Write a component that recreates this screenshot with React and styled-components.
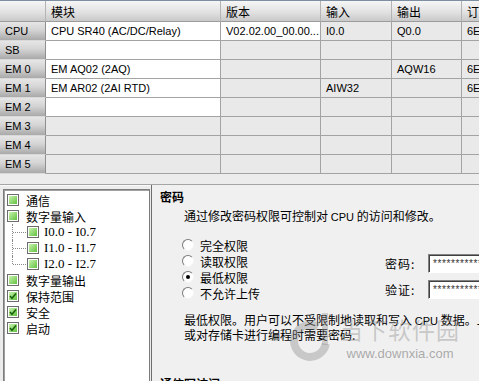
import React from 'react';
import styled, { createGlobalStyle } from 'styled-components';

const GlobalStyle = createGlobalStyle`
  html, body {
    margin: 0;
    padding: 0;
    background: #ececec;
  }
  body {
    font-family: "Liberation Sans", "Noto Sans CJK SC", sans-serif;
    color: #000;
  }
`;

const Window = styled.div`
  width: 479px;
  height: 381px;
  overflow: hidden;
  display: flex;
  flex-direction: column;
  background: #ececec;
`;

const Table = styled.div`
  display: grid;
  grid-template-columns: 46px 175px 100px 71px 70px 80px;
  grid-template-rows: 21px repeat(8, 19px);
  width: 542px;
  border-top: 1px solid #7f8fa2;
  box-sizing: border-box;
`;

const HeadCell = styled.div`
  display: flex;
  align-items: center;
  padding-left: 5px;
  font-family: "Noto Sans CJK SC", sans-serif;
  font-size: 12px;
  background: linear-gradient(#f6f6f6, #e2e2e2 55%, #c9c9c9);
  border-right: 1px solid #b4b4b4;
  border-bottom: 1px solid #9c9c9c;
  white-space: nowrap;
  overflow: hidden;
`;

const RowHead = styled.div`
  display: flex;
  align-items: center;
  padding-left: 5px;
  font-size: 11px;
  background: linear-gradient(#e6e6e6, #d4d4d4 45%, #a9a9a9);
  border-bottom: 1px solid #d9d9d9;
  border-right: 1px solid #8f8f8f;
  box-sizing: border-box;
`;

const Cell = styled.div`
  display: flex;
  align-items: center;
  padding-left: 5px;
  font-size: 11px;
  background: ${p => (p.$white ? '#ffffff' : '#e9e9e9')};
  border-right: 1px solid #a3a3a3;
  border-bottom: 1px solid #a3a3a3;
  white-space: nowrap;
  overflow: hidden;
`;

const Gap = styled.div`
  height: 10px;
  border-bottom: 1px solid #a5a5a5;
  box-shadow: 0 1px 0 #fafafa;
`;

const Bottom = styled.div`
  flex: 1;
  display: flex;
  min-height: 0;
`;

const TreePanel = styled.div`
  width: 147px;
  margin: 4px 0 0 3px;
  background: #fff;
  border: 1px solid #7c7c7c;
  border-bottom: none;
  box-shadow: inset 1px 1px 0 #a0a0a0;
  padding-top: 2px;
  box-sizing: border-box;
  flex-shrink: 0;
`;

const TreeRow = styled.div`
  position: relative;
  height: 16px;
  display: flex;
  align-items: center;
  gap: ${p => (p.$sub ? '5px' : '7px')};
  padding-left: ${p => (p.$sub ? '23px' : '3px')};
  font-family: ${p => (p.$sub ? '"Liberation Serif", serif' : '"Noto Sans CJK SC", sans-serif')};
  font-size: ${p => (p.$sub ? '13px' : '12px')};
  white-space: nowrap;

  ${p => p.$sub && `
    &::before {
      content: '';
      position: absolute;
      left: 8px;
      top: 0;
      height: ${p.$last ? '8px' : '16px'};
      border-left: 1px dotted #8a8a8a;
    }
    &::after {
      content: '';
      position: absolute;
      left: 9px;
      top: 8px;
      width: 13px;
      border-top: 1px dotted #8a8a8a;
    }
  `}
`;

const Box = styled.span`
  position: relative;
  width: 12px;
  height: 12px;
  box-sizing: border-box;
  border: 1px solid #6c6c6c;
  padding: 1px;
  background: linear-gradient(135deg, #c8f2ad, #62c23f) content-box, #ffffff;
  flex-shrink: 0;
  display: flex;
  align-items: center;
  justify-content: center;
`;

const RightPanel = styled.div`
  position: relative;
  flex: 1;
  min-width: 0;
  border-left: 1px solid #6e6e6e;
  margin-left: 1px;
  padding: 4px 0 0 8px;
  background: #f0f0f0;
  font-family: "Noto Sans CJK SC", sans-serif;
  font-size: 12px;
  overflow: hidden;
  white-space: nowrap;
`;

const Heading = styled.div`
  font-weight: bold;
  line-height: 16px;
  margin-top: ${p => p.$top || 0}px;
`;

const Indented = styled.div`
  margin-left: 24px;
  margin-top: ${p => p.$top || 0}px;
  line-height: ${p => p.$lh || 16}px;
`;

const Latin = styled.span`
  font-family: "Liberation Sans", sans-serif;
  font-size: 11px;
`;

const OptionsRow = styled.div`
  display: flex;
  margin: 12px 0 0 22px;
`;

const RadioList = styled.div`
  width: 203px;
  flex-shrink: 0;
  display: flex;
  flex-direction: column;
`;

const RadioRow = styled.label`
  height: 16px;
  display: flex;
  align-items: center;
  gap: 6px;
`;

const Radio = styled.span`
  width: 12px;
  height: 12px;
  box-sizing: border-box;
  border-radius: 50%;
  border: 1px solid;
  border-color: #7a7a7a #f4f4f4 #f4f4f4 #7a7a7a;
  background: #fff;
  display: flex;
  align-items: center;
  justify-content: center;

  &::after {
    content: '';
    width: 4px;
    height: 4px;
    border-radius: 50%;
    background: ${p => (p.$on ? '#000' : 'transparent')};
  }
`;

const Fields = styled.div`
  flex-shrink: 0;
  display: flex;
  flex-direction: column;
  gap: 7px;
  padding-top: 17px;
`;

const FieldRow = styled.div`
  display: flex;
  align-items: center;
  height: 19px;
`;

const FieldLabel = styled.span`
  width: 43px;
  letter-spacing: 1px;
`;

const Input = styled.div`
  width: 120px;
  height: 19px;
  box-sizing: border-box;
  background: #fff;
  border: 1px solid;
  border-color: #828282 #fff #fff #828282;
  box-shadow: inset 1px 1px 0 #404040;
  padding: 3px 0 0 4px;
  font-family: "Liberation Sans", sans-serif;
  font-size: 10px;
  letter-spacing: 0.6px;
  color: #333;
`;

const Watermark = styled.div`
  position: absolute;
  left: 136px;
  top: 124px;
  width: 220px;
  display: flex;
  align-items: center;
  gap: 8px;
  pointer-events: none;
`;

const MarkText = styled.div`
  display: flex;
  flex-direction: column;
  align-items: center;
`;

const MarkBig = styled.div`
  font-size: 23px;
  letter-spacing: 1px;
  color: rgba(150, 150, 150, 0.45);
  line-height: 28px;
`;

const MarkUrl = styled.div`
  font-family: "Liberation Sans", sans-serif;
  font-size: 13px;
  color: rgba(120, 120, 120, 0.6);
  margin-top: 3px;
`;

const rows = [
  { label: 'CPU', cells: ['CPU SR40 (AC/DC/Relay)', 'V02.02.00_00.00...', 'I0.0', 'Q0.0', '6ES7 288-1SR40-0AA0'], white: [0, 1] },
  { label: 'SB', cells: ['', '', '', '', ''], white: [0] },
  { label: 'EM 0', cells: ['EM AQ02 (2AQ)', '', '', 'AQW16', '6ES7 288-3AQ02-0AA0'], white: [0] },
  { label: 'EM 1', cells: ['EM AR02 (2AI RTD)', '', 'AIW32', '', '6ES7 288-3AR02-0AA0'], white: [0] },
  { label: 'EM 2', cells: ['', '', '', '', ''], white: [0] },
  { label: 'EM 3', cells: ['', '', '', '', ''], white: [] },
  { label: 'EM 4', cells: ['', '', '', '', ''], white: [] },
  { label: 'EM 5', cells: ['', '', '', '', ''], white: [] },
];

const tree = [
  { text: '通信' },
  { text: '数字量输入' },
  { text: 'I0.0 - I0.7', sub: true },
  { text: 'I1.0 - I1.7', sub: true },
  { text: 'I2.0 - I2.7', sub: true, last: true },
  { text: '数字量输出' },
  { text: '保持范围', checked: true },
  { text: '安全', checked: true },
  { text: '启动', checked: true },
];

const Check = () => (
  <svg width="8" height="8" viewBox="0 0 8 8" style={{ position: 'absolute' }}>
    <path d="M1 4 L3 6.2 L7 1.5" fill="none" stroke="#17600c" strokeWidth="1.6" />
  </svg>
);

const Logo = () => (
  <svg width="44" height="58" viewBox="0 0 44 58">
    <path d="M30 18 A16 16 0 1 0 37.8 34.8" fill="none" stroke="rgba(140,140,140,0.4)" strokeWidth="8" />
    <path d="M37 4 L37 36" fill="none" stroke="rgba(140,140,140,0.35)" strokeWidth="6" />
  </svg>
);

export default function App() {
  return (
    <Window>
      <GlobalStyle />
      <Table>
        <HeadCell />
        <HeadCell>模块</HeadCell>
        <HeadCell>版本</HeadCell>
        <HeadCell>输入</HeadCell>
        <HeadCell>输出</HeadCell>
        <HeadCell>订货号</HeadCell>
        {rows.map(r => (
          <React.Fragment key={r.label}>
            <RowHead>{r.label}</RowHead>
            {r.cells.map((c, i) => (
              <Cell key={i} $white={r.white.includes(i)}>{c}</Cell>
            ))}
          </React.Fragment>
        ))}
      </Table>
      <Gap />
      <Bottom>
        <TreePanel>
          {tree.map(t => (
            <TreeRow key={t.text} $sub={t.sub} $last={t.last}>
              <Box>{t.checked && <Check />}</Box>
              {t.text}
            </TreeRow>
          ))}
        </TreePanel>
        <RightPanel>
          <Heading>密码</Heading>
          <Indented $top={3}>
            通过修改密码权限可控制对 <Latin>CPU</Latin> 的访问和修改。
          </Indented>
          <OptionsRow>
            <RadioList>
              <RadioRow><Radio />完全权限</RadioRow>
              <RadioRow><Radio />读取权限</RadioRow>
              <RadioRow><Radio $on />最低权限</RadioRow>
              <RadioRow><Radio />不允许上传</RadioRow>
            </RadioList>
            <Fields>
              <FieldRow>
                <FieldLabel>密码:</FieldLabel>
                <Input>************</Input>
              </FieldRow>
              <FieldRow>
                <FieldLabel>验证:</FieldLabel>
                <Input>************</Input>
              </FieldRow>
            </Fields>
          </OptionsRow>
          <Indented $top={12} $lh={14}>
            最低权限。用户可以不受限制地读取和写入 <Latin>CPU</Latin> 数据。上传
            <br />
            或对存储卡进行编程时需要密码.
          </Indented>
          <Heading $top={34}>通信写访问</Heading>
          <Watermark>
            <Logo />
            <MarkText>
              <MarkBig>当下软件园</MarkBig>
              <MarkUrl>www.downxia.com</MarkUrl>
            </MarkText>
          </Watermark>
        </RightPanel>
      </Bottom>
    </Window>
  );
}
